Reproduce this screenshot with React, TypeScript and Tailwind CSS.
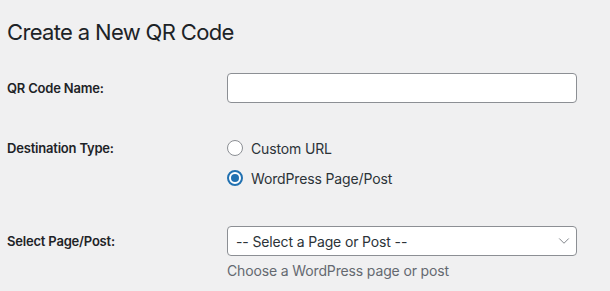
import { ChevronDown } from "lucide-react"

const Label = ({ children }: { children: React.ReactNode }) => (
  <div className="w-[220px] shrink-0 pt-[2px] text-[13px] font-semibold tracking-[-0.015em] text-[#1d2327]">{children}</div>
)

const Radio = ({ checked, label }: { checked?: boolean; label: string }) => (
  <label className="flex h-[30px] items-center gap-[8px] text-[14px] tracking-[-0.01em] text-[#2c3338]">
    {checked ? (
      <span className="flex h-[16px] w-[16px] items-center justify-center rounded-full border-2 border-[#2271b1] bg-white">
        <span className="h-[8px] w-[8px] rounded-full bg-[#2271b1]" />
      </span>
    ) : (
      <span className="h-[16px] w-[16px] rounded-full border border-[#8c8f94] bg-white" />
    )}
    {label}
  </label>
)

export default function App() {
  return (
    <div className="min-h-screen bg-[#f0f0f1] pl-[7px] pt-[17px] font-['Inter',sans-serif] text-[#1d2327]">
      <h1 className="h-[30px] text-[22px] font-normal leading-[30px] tracking-[-0.03em]">Create a New QR Code</h1>

      {/* QR code name */}
      <div className="mt-[26px] flex items-center">
        <Label>QR Code Name:</Label>
        <input
          type="text"
          className="h-[30px] w-[350px] rounded-[4px] border border-[#8c8f94] bg-white px-2 text-[14px] outline-none"
        />
      </div>

      {/* destination */}
      <div className="mt-[30px] flex">
        <div className="flex h-[30px] items-center">
          <Label>Destination Type:</Label>
        </div>
        <div className="flex flex-col">
          <Radio label="Custom URL" />
          <Radio checked label="WordPress Page/Post" />
        </div>
      </div>

      {/* page select */}
      <div className="mt-[33px] flex">
        <div className="flex h-[30px] items-center">
          <Label>Select Page/Post:</Label>
        </div>
        <div className="flex flex-col">
          <div className="flex h-[30px] w-[350px] items-center justify-between rounded-[4px] border border-[#8c8f94] bg-white pl-[8px] pr-[3px] text-[14px] tracking-[-0.01em] text-[#2c3338]">
            <span>-- Select a Page or Post --</span>
            <ChevronDown className="h-[18px] w-[18px] text-[#787c82]" strokeWidth={1.25} />
          </div>
          <p className="mt-[6px] text-[14px] leading-[18px] tracking-[-0.01em] text-[#646970]">Choose a WordPress page or post</p>
        </div>
      </div>
    </div>
  )
}
